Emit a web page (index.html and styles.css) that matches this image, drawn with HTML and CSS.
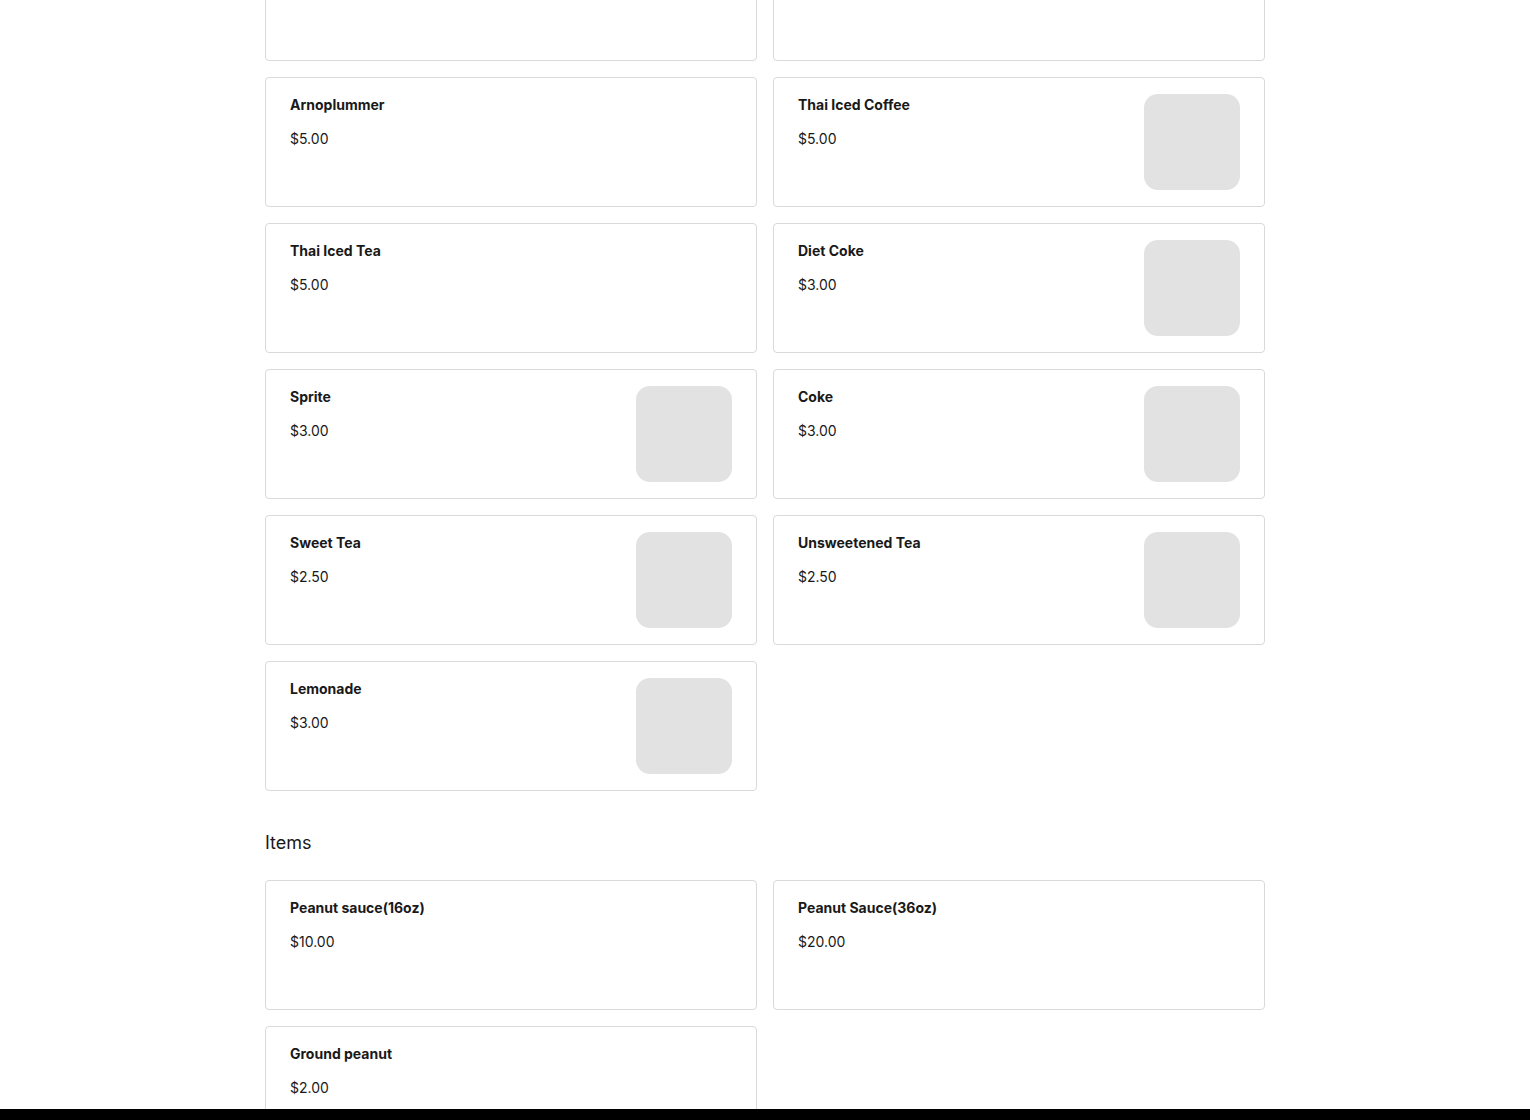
FILE: index.html
```html
<!DOCTYPE html>
<html lang="en">
<head>
<meta charset="utf-8">
<title>Menu</title>
<link rel="stylesheet" href="styles.css">
</head>
<body>
<main class="menu">
  <section class="section">
    <div class="grid">
      <div class="card"><div class="info"><div class="name">&nbsp;</div><div class="price">&nbsp;</div></div></div>
      <div class="card"><div class="info"><div class="name">&nbsp;</div><div class="price">&nbsp;</div></div></div>
      <div class="card"><div class="info"><div class="name">Arnoplummer</div><div class="price">$5.00</div></div></div>
      <div class="card"><div class="info"><div class="name">Thai Iced Coffee</div><div class="price">$5.00</div></div><div class="thumb"></div></div>
      <div class="card"><div class="info"><div class="name">Thai Iced Tea</div><div class="price">$5.00</div></div></div>
      <div class="card"><div class="info"><div class="name">Diet Coke</div><div class="price">$3.00</div></div><div class="thumb"></div></div>
      <div class="card"><div class="info"><div class="name">Sprite</div><div class="price">$3.00</div></div><div class="thumb"></div></div>
      <div class="card"><div class="info"><div class="name">Coke</div><div class="price">$3.00</div></div><div class="thumb"></div></div>
      <div class="card"><div class="info"><div class="name">Sweet Tea</div><div class="price">$2.50</div></div><div class="thumb"></div></div>
      <div class="card"><div class="info"><div class="name">Unsweetened Tea</div><div class="price">$2.50</div></div><div class="thumb"></div></div>
      <div class="card"><div class="info"><div class="name">Lemonade</div><div class="price">$3.00</div></div><div class="thumb"></div></div>
    </div>
  </section>
  <section class="section">
    <h2 class="section-title">Items</h2>
    <div class="grid">
      <div class="card"><div class="info"><div class="name">Peanut sauce(16oz)</div><div class="price">$10.00</div></div></div>
      <div class="card"><div class="info"><div class="name">Peanut Sauce(36oz)</div><div class="price">$20.00</div></div></div>
      <div class="card"><div class="info"><div class="name">Ground peanut</div><div class="price">$2.00</div></div></div>
    </div>
  </section>
</main>
<div class="bottom-bar"></div>
</body>
</html>
```
FILE: styles.css
```css
html, body {
  margin: 0;
  padding: 0;
  background: #fff;
}
body {
  font-family: Inter, "Noto Sans", "Liberation Sans", sans-serif;
  color: #191919;
  overflow: hidden;
  height: 1120px;
}
.menu {
  width: 1000px;
  margin: -69px auto 0;
}
.grid {
  display: grid;
  grid-template-columns: 1fr 1fr;
  gap: 16px;
}
.card {
  box-sizing: border-box;
  height: 130px;
  border: 1px solid #d9d9d9;
  border-radius: 4px;
  padding: 16px 24px;
  display: flex;
  justify-content: space-between;
  align-items: flex-start;
  background: #fff;
}
.info {
  display: flex;
  flex-direction: column;
}
.name {
  font-size: 14px;
  font-weight: 700;
  line-height: 20px;
  margin-top: 1px;
  margin-bottom: 14px;
}
.price {
  font-size: 14px;
  font-weight: 400;
  line-height: 20px;
}
.thumb {
  width: 96px;
  height: 96px;
  border-radius: 14px;
  background: #e2e2e2;
  flex: none;
}
.section-title {
  font-size: 18px;
  font-weight: 400;
  line-height: 26px;
  margin: 39px 0 24px;
}
.bottom-bar {
  position: fixed;
  left: 0;
  right: 0;
  bottom: 0;
  height: 11px;
  background: #000;
}
```
